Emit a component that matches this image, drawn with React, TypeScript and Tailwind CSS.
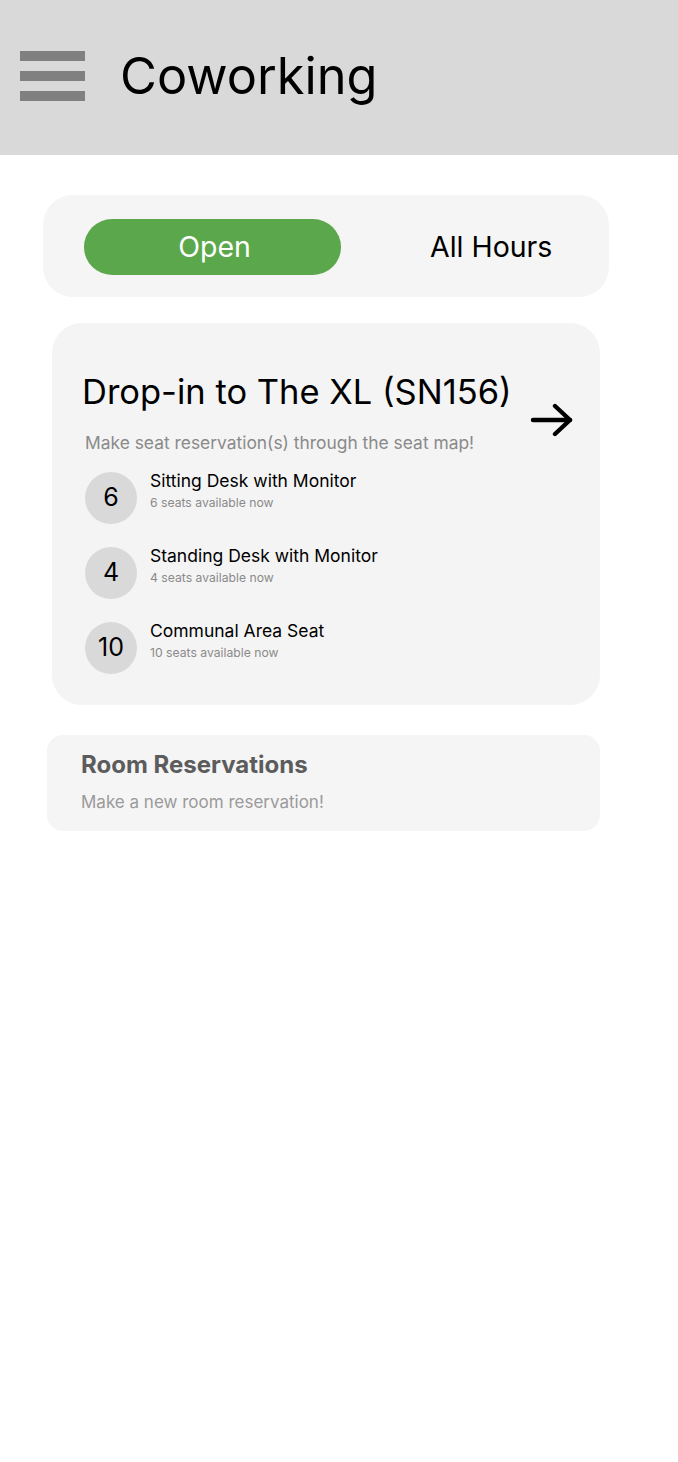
import React from "react";

const rows = [
  { n: "6", title: "Sitting Desk with Monitor", sub: "6 seats available now" },
  { n: "4", title: "Standing Desk with Monitor", sub: "4 seats available now" },
  { n: "10", title: "Communal Area Seat", sub: "10 seats available now" },
];

export default function App() {
  return (
    <div className="min-h-[1462px] w-[678px] bg-white" style={{ fontFamily: "Inter, 'Noto Sans', sans-serif" }}>
      <header className="flex h-[155px] items-center bg-[#d9d9d9] pl-[20px]">
        <div className="mb-[3px] flex w-[65px] flex-col gap-[10px]">
          <div className="h-[10px] bg-[#808080]" />
          <div className="h-[10px] bg-[#808080]" />
          <div className="h-[10px] bg-[#808080]" />
        </div>
        <h1 className="mb-[2px] ml-[35px] text-[50.5px] leading-none text-black">Coworking</h1>
      </header>

      <div className="ml-[43px] mt-[40px] flex h-[102px] w-[566px] items-center rounded-[30px] bg-[#f5f5f5] pl-[41px] pt-[2px]">
        <div className="flex h-[56px] w-[257px] items-center justify-center rounded-full bg-[#5ba74b] pl-[4px] text-[28.5px] text-white">
          Open
        </div>
        <div className="ml-[89px] text-[28.5px] text-black">All Hours</div>
      </div>

      <div className="ml-[52px] mt-[26px] flex h-[382px] w-[548px] flex-col rounded-[30px] bg-[#f4f4f4] pl-[30px] pt-[46px]">
        <div className="flex items-start">
          <div className="text-[34.5px] leading-[46px] text-black">Drop-in to The XL (SN156)</div>
          <svg className="ml-[18px] mt-[34px]" width="44" height="34" viewBox="0 0 44 34" fill="none" stroke="black" strokeWidth="4.4" strokeLinecap="round" strokeLinejoin="round">
            <path d="M3 17 H40" />
            <path d="M25 3 L40 17 L25 31" />
          </svg>
        </div>
        <div className="ml-[3px] mt-[-7px] text-[17.4px] text-[#8a8a8a]">Make seat reservation(s) through the seat map!</div>
        <div className="ml-[3px] mt-[16px] flex flex-col gap-[23px]">
          {rows.map((r) => (
            <div key={r.n} className="flex items-center">
              <div className="flex h-[52px] w-[52px] items-center justify-center rounded-full bg-[#d9d9d9] text-[25px] text-black">
                {r.n}
              </div>
              <div className="ml-[13px] -mt-[14px] flex flex-col">
                <div className="text-[17.5px] leading-[24px] text-black">{r.title}</div>
                <div className="text-[12.2px] leading-[20px] text-[#8a8a8a]">{r.sub}</div>
              </div>
            </div>
          ))}
        </div>
      </div>

      <div className="ml-[47px] mt-[30px] flex h-[96px] w-[553px] flex-col rounded-[16px] bg-[#f5f5f5] pl-[34px] pt-[15px]">
        <div className="text-[24px] font-bold leading-[30px] text-[#5c5c5c]">Room Reservations</div>
        <div className="mt-[11px] text-[17px] leading-[22px] text-[#9a9a9a]">Make a new room reservation!</div>
      </div>
    </div>
  );
}
